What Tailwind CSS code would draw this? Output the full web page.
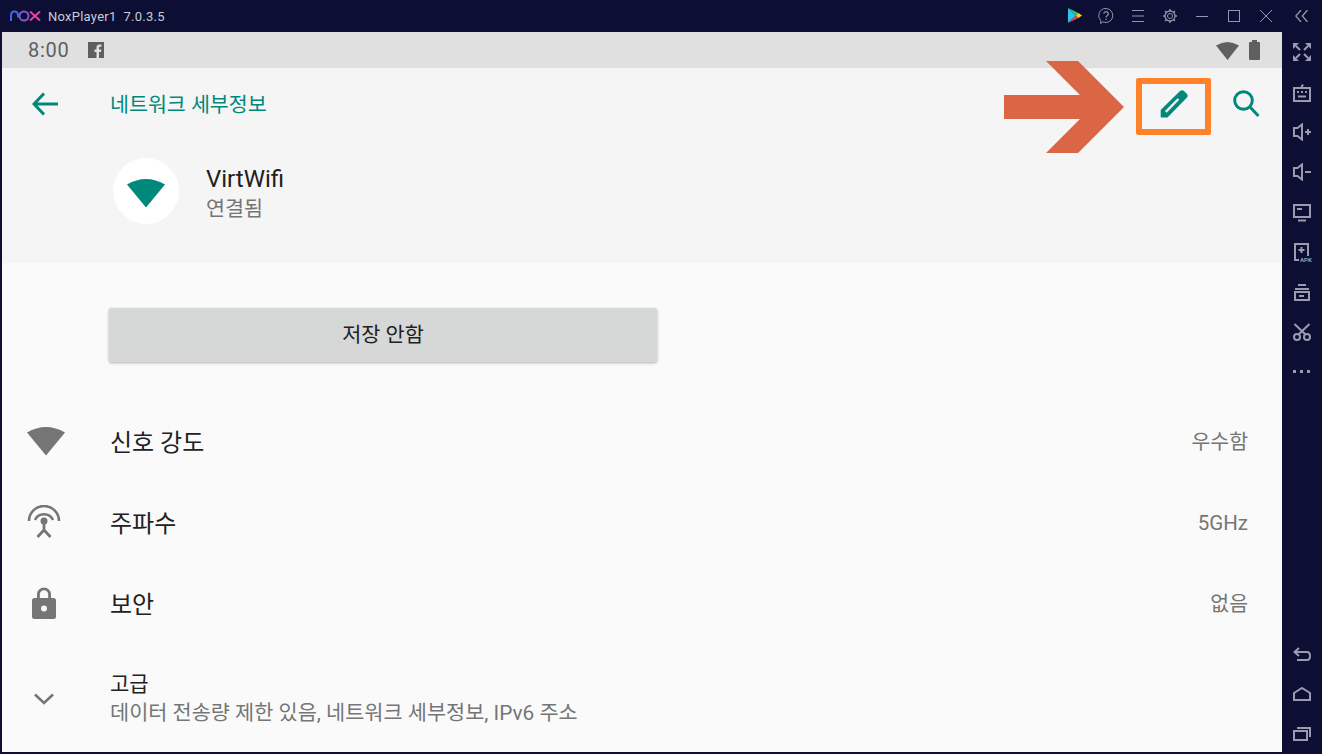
<!DOCTYPE html>
<html lang="ko">
<head>
<meta charset="utf-8">
<script src="https://cdn.jsdelivr.net/npm/@tailwindcss/browser@4"></script>
</head>
<body class="m-0 w-[1322px] h-[754px] overflow-hidden bg-[#0c0f33] font-['Roboto','Noto_Sans_CJK_KR',sans-serif]">
<div class="relative w-[1322px] h-[754px] flex flex-col">
  <!-- title bar -->
  <header class="h-8 flex items-center text-[#c9cbd6] shrink-0">
    <svg class="ml-[10px] w-[31px] h-[12px]" viewBox="0 0 31 12" fill="none" stroke-width="2">
      <path d="M1 11V5.500Q1 1.500 4.500 1.500T8 5.500V7.500" stroke="#3f66ea"/>
      <circle cx="14" cy="6" r="4.500" stroke="#8158cc"/>
      <path d="M20 1.500L30 10.500M30 1.500L20 10.500" stroke="#e8429f"/>
    </svg>
    <span class="ml-[7px] text-[13px] leading-none tracking-[0.25px]">NoxPlayer1&nbsp; 7.0.3.5</span>
    <div class="ml-auto flex items-center h-8 relative w-[262px]">
      <svg class="absolute left-[8px] top-[8px] w-[14px] h-[15px]" viewBox="0 0 14 15"><path d="M0 0L8 7.500L0 15Z" fill="#29c5e8"/><path d="M0 0L8 7.500L10.500 5Z" fill="#35c46a"/><path d="M0 15L8 7.500L10.500 10Z" fill="#e8404a"/><path d="M10.500 5L14 7.500L10.500 10L8 7.500Z" fill="#f7d21e"/></svg>
      <svg class="absolute left-[38px] top-[8px] w-[16px] h-[17px]" viewBox="0 0 16 17" fill="none" stroke="#8f92a6" stroke-width="1"><path d="M8 .5a7 7 0 1 1-3 13.400L2.500 15.500l.3-3A7 7 0 0 1 8 .5Z"/><path d="M5.800 5.800a2.200 2.200 0 1 1 3.400 1.900c-.8.500-1.200.9-1.200 1.800M8 10.800v1.200" stroke-width="1.300"/></svg>
      <svg class="absolute left-[72px] top-[10px] w-[12px] h-[12px]" viewBox="0 0 12 12" stroke="#9497aa"><path d="M0 .5H12M0 6H12M0 11.500H12"/></svg>
      <svg class="absolute left-[103px] top-[9px] w-[14px] h-[14px]" viewBox="0 0 14 14" fill="none" stroke="#8f92a6"><circle cx="7" cy="7" r="2.500"/><circle cx="7" cy="7" r="5" stroke-width="1.300"/><path d="M7 0v2M7 12v2M0 7h2M12 7h2M2 2l1.500 1.500M10.500 10.500L12 12M12 2l-1.500 1.500M3.500 10.500L2 12" stroke-width="1.500"/></svg>
      <div class="absolute left-[136px] top-[16px] w-3 h-px bg-[#9497aa]"></div>
      <div class="absolute left-[168px] top-[10px] w-3 h-3 border border-[#9497aa]"></div>
      <svg class="absolute left-[200px] top-[10px] w-3 h-3" viewBox="0 0 12 12" stroke="#9497aa"><path d="M0 0L12 12M12 0L0 12"/></svg>
      <svg class="absolute left-[235px] top-[10px] w-[13px] h-3" viewBox="0 0 13 12" fill="none" stroke="#9497aa" stroke-width="1.300"><path d="M6 0L.8 6L6 12M12.500 0L7.300 6L12.500 12"/></svg>
    </div>
  </header>

  <div class="flex flex-1 min-h-0">
    <!-- android screen -->
    <main class="ml-[2px] w-[1280px] mb-[2px] flex flex-col bg-[#fafafa] relative">
      <div class="h-9 bg-[#e0e0e0] flex items-center shrink-0 text-[#5f5f5f]">
        <span class="ml-[26px] text-[20px] leading-none tracking-[0.7px]">8:00</span>
        <svg class="ml-[19px] w-4 h-4" viewBox="0 0 16 16"><path fill="#5f5f5f" d="M0 0H16V16H11V10H13L13.300 7.500H11V6C11 5.200 11.300 4.800 12.200 4.800H13.400V2.600C13 2.500 12.300 2.500 11.600 2.500C9.700 2.500 8.500 3.600 8.500 5.700V7.500H6.500V10H8.500V16H0Z"/></svg>
        <svg class="ml-auto w-[23px] h-[19px]" viewBox="0 0 23 19"><path fill="#5f5f5f" d="M0 4.500Q11.500-2.500 23 4.500L11.500 19Z"/></svg>
        <svg class="ml-[10px] mr-[22px] w-[11px] h-[20px]" viewBox="0 0 11 20"><path fill="#5f5f5f" d="M3 0H8V2H10Q11 2 11 3V19Q11 20 10 20H1Q0 20 0 19V3Q0 2 1 2H3Z"/></svg>
      </div>

      <section class="h-[195px] bg-[#f5f5f5] shrink-0 relative">
        <div class="h-[72px] flex items-center">
          <svg class="ml-[30px] w-[26px] h-[24px]" viewBox="0 0 26 24" fill="none" stroke="#00897b" stroke-width="3"><path d="M26 12H3M12 1.500L2 12L12 22.500"/></svg>
          <h1 class="ml-[52px] pt-[2px] text-[#00897b] text-[20.6px] font-normal leading-none">네트워크 세부정보</h1>
          <svg class="ml-auto w-[28px] h-[28px]" viewBox="0 0 28 28"><path fill="#00897b" d="M.7 27.500V20L19.500 1.500Q22-.5 24 1L27 4Q28.500 6 26.500 8L7.500 27.500Z"/><path fill="none" stroke="#f5f5f5" stroke-width="2.400" d="M5.800 21.800L18.400 9"/></svg>
          <svg class="ml-[43px] mr-[21px] w-[30px] h-[30px]" viewBox="0 0 30 30" fill="none" stroke="#00897b" stroke-width="3"><circle cx="12.500" cy="11.500" r="8.800"/><path d="M19 18L27.500 27"/></svg>
        </div>
        <div class="flex items-center ml-[111px] mt-[18px]">
          <div class="w-[66px] h-[66px] rounded-full bg-white flex items-center justify-center">
            <svg class="w-[38px] h-[31px] mt-[2px]" viewBox="0 0 38 30"><path fill="#00897b" d="M0 7Q19-4 38 7L19 30Z"/></svg>
          </div>
          <div class="ml-[27px] pt-[5px]">
            <div class="text-[#212121] text-[24px] leading-[30px]">VirtWifi</div>
            <div class="text-[#757575] text-[20.7px] leading-[30px]">연결됨</div>
          </div>
        </div>
      </section>

      <div class="ml-[107px] mt-[45px] w-[548px] h-[54px] pt-[2px] bg-[#d6d7d7] rounded-[2px] shadow-[0_1px_3px_rgba(0,0,0,0.3)] flex items-center justify-center text-[#212121] text-[20.8px] shrink-0">저장 안함</div>

      <ul class="mt-[38px] flex flex-col">
        <li class="h-[81px] flex items-center">
          <svg class="ml-[25px] w-[38px] h-[31px]" viewBox="0 0 38 30"><path fill="#757575" d="M0 7Q19-4 38 7L19 30Z"/></svg>
          <span class="ml-[45px] pt-[4px] text-[#212121] text-[24px] leading-none">신호 강도</span>
          <span class="ml-auto mr-[34px] pt-[4px] text-[#757575] text-[20.5px]">우수함</span>
        </li>
        <li class="h-[81px] flex items-center">
          <svg class="ml-[25px] w-[34px] h-[33px]" viewBox="0 0 34 33" fill="none" stroke="#757575"><path stroke-width="2.500" d="M2 16A15 15 0 0 1 32 16"/><path stroke-width="2.500" d="M8 15A10 10 0 0 1 26 15"/><circle cx="17" cy="16" r="3.500" fill="#757575" stroke="none"/><path stroke-width="2.800" d="M17 18V26M17 25L10.500 32M17 25L23.500 32"/></svg>
          <span class="ml-[49px] pt-[4px] text-[#212121] text-[24px] leading-none">주파수</span>
          <span class="ml-auto mr-[34px] pt-[4px] text-[#757575] text-[20.5px]">5GHz</span>
        </li>
        <li class="h-[81px] flex items-center">
          <svg class="ml-[30px] w-[24px] h-[32px]" viewBox="0 0 24 32"><path fill="#757575" fill-rule="evenodd" d="M5 11V7.500a7 7 0 0 1 14 0V11h2.500A2.500 2.500 0 0 1 24 13.500v16a2.500 2.500 0 0 1-2.500 2.500h-19A2.500 2.500 0 0 1 0 29.500v-16A2.500 2.500 0 0 1 2.500 11ZM7.800 11h8.400V7.500a4.200 4.200 0 0 0-8.400 0ZM12 18.500a3 3 0 1 0 0 6 3 3 0 0 0 0-6Z"/></svg>
          <span class="ml-[54px] pt-[4px] text-[#212121] text-[24px] leading-none">보안</span>
          <span class="ml-auto mr-[34px] pt-[4px] text-[#757575] text-[20.5px]">없음</span>
        </li>
        <li class="h-[69px] mt-[21px] flex items-center">
          <svg class="ml-[32px] w-[20px] h-[12px]" viewBox="0 0 20 12" fill="none" stroke="#757575" stroke-width="2.500"><path d="M1 1.500L10 10L19 1.500"/></svg>
          <div class="ml-[56px]">
            <div class="text-[#212121] text-[21px] leading-[29px]">고급</div>
            <div class="text-[#757575] text-[20.8px] leading-[29px]">데이터 전송량 제한 있음, 네트워크 세부정보, IPv6 주소</div>
          </div>
        </li>
      </ul>
    </main>

    <!-- right rail -->
    <aside class="w-10 relative">
      <svg class="absolute left-[11px] top-[11px] w-[18px] h-[18px]" viewBox="0 0 18 18" fill="#9a9cae" stroke="#9a9cae"><path stroke="none" d="M0 0H6L0 6ZM18 0V6L12 0ZM0 18V12L6 18ZM18 18H12L18 12Z"/><path stroke-width="2" d="M3 3L7 7M15 3L11 7M3 15L7 11M15 15L11 11"/></svg>
      <svg class="absolute left-[11px] top-[52px] w-[18px] h-[18px]" viewBox="0 0 18 18" fill="none" stroke="#9a9cae" stroke-width="2"><path d="M1 4H17V17H1ZM8 4L10 .5M4 8H6M8 8H10M12 8H14M5 12.500H13"/></svg>
      <svg class="absolute left-[11px] top-[91px] w-[18px] h-[18px]" viewBox="0 0 18 18" fill="none" stroke="#9a9cae" stroke-width="2"><path d="M1 5H4.500L9 1.500V16.500L4.500 13H1ZM12 9H18M15 6V12"/></svg>
      <svg class="absolute left-[11px] top-[131px] w-[18px] h-[18px]" viewBox="0 0 18 18" fill="none" stroke="#9a9cae" stroke-width="2"><path d="M1 5H4.500L9 1.500V16.500L4.500 13H1ZM12 9H18"/></svg>
      <svg class="absolute left-[11px] top-[172px] w-[18px] h-[18px]" viewBox="0 0 18 18" fill="none" stroke="#9a9cae" stroke-width="2"><path d="M1 1H17V13H1ZM4 5H9M5 16.500H13"/></svg>
      <svg class="absolute left-[12px] top-[211px] w-[20px] h-[19px]" viewBox="0 0 20 19" fill="none" stroke="#9a9cae" stroke-width="2"><path d="M14 13V1H1V17H5M7.500 4V10M4.500 7H10.500"/><text x="6" y="18.500" font-size="6" fill="#9a9cae" stroke="none" font-family="Roboto" font-weight="700">APK</text></svg>
      <svg class="absolute left-[12px] top-[252px] w-[16px] h-[17px]" viewBox="0 0 16 17" fill="none" stroke="#9a9cae" stroke-width="2"><path d="M4 1H12M1 5H15M1 8H15V16H1ZM5 12H10"/></svg>
      <svg class="absolute left-[11px] top-[291px] w-[18px] h-[18px]" viewBox="0 0 18 18" fill="none" stroke="#9a9cae" stroke-width="2"><circle cx="4" cy="14" r="3"/><circle cx="14" cy="14" r="3"/><path d="M1.500 1L12.500 11.500M16.500 1L5.500 11.500"/></svg>
      <div class="absolute left-[11px] top-[338px] flex gap-[4px]"><div class="w-[3px] h-[3px] bg-[#9a9cae]"></div><div class="w-[3px] h-[3px] bg-[#9a9cae]"></div><div class="w-[3px] h-[3px] bg-[#9a9cae]"></div></div>
      <svg class="absolute left-[11px] top-[615px] w-[18px] h-[14px]" viewBox="0 0 18 14" fill="none" stroke="#9a9cae" stroke-width="2"><path d="M6 1L1.500 5L6 9M2 5H14Q17 5 17 9T14 13H4"/></svg>
      <svg class="absolute left-[11px] top-[655px] w-[18px] h-[14px]" viewBox="0 0 18 14" fill="none" stroke="#9a9cae" stroke-width="2"><path d="M1 6L9 1L17 6V13H1Z"/></svg>
      <svg class="absolute left-[11px] top-[695px] w-[18px] h-[14px]" viewBox="0 0 18 14" fill="none" stroke="#9a9cae" stroke-width="2"><path d="M1 4H14V13H1ZM4 1H17V10"/></svg>
    </aside>
  </div>

  <!-- annotation overlay -->
  <svg class="absolute left-[1004px] top-[61px] w-[120px] h-[92px]" viewBox="0 0 120 92"><path fill="#da6645" d="M0 34H76L42 0H74L120 46L74 92H42L76 58H0Z"/></svg>
  <div class="absolute left-[1136px] top-[78px] w-[75px] h-[57px] border-[6px] border-[#ff822b] rounded-[2px]"></div>
</div>
</body>
</html>
